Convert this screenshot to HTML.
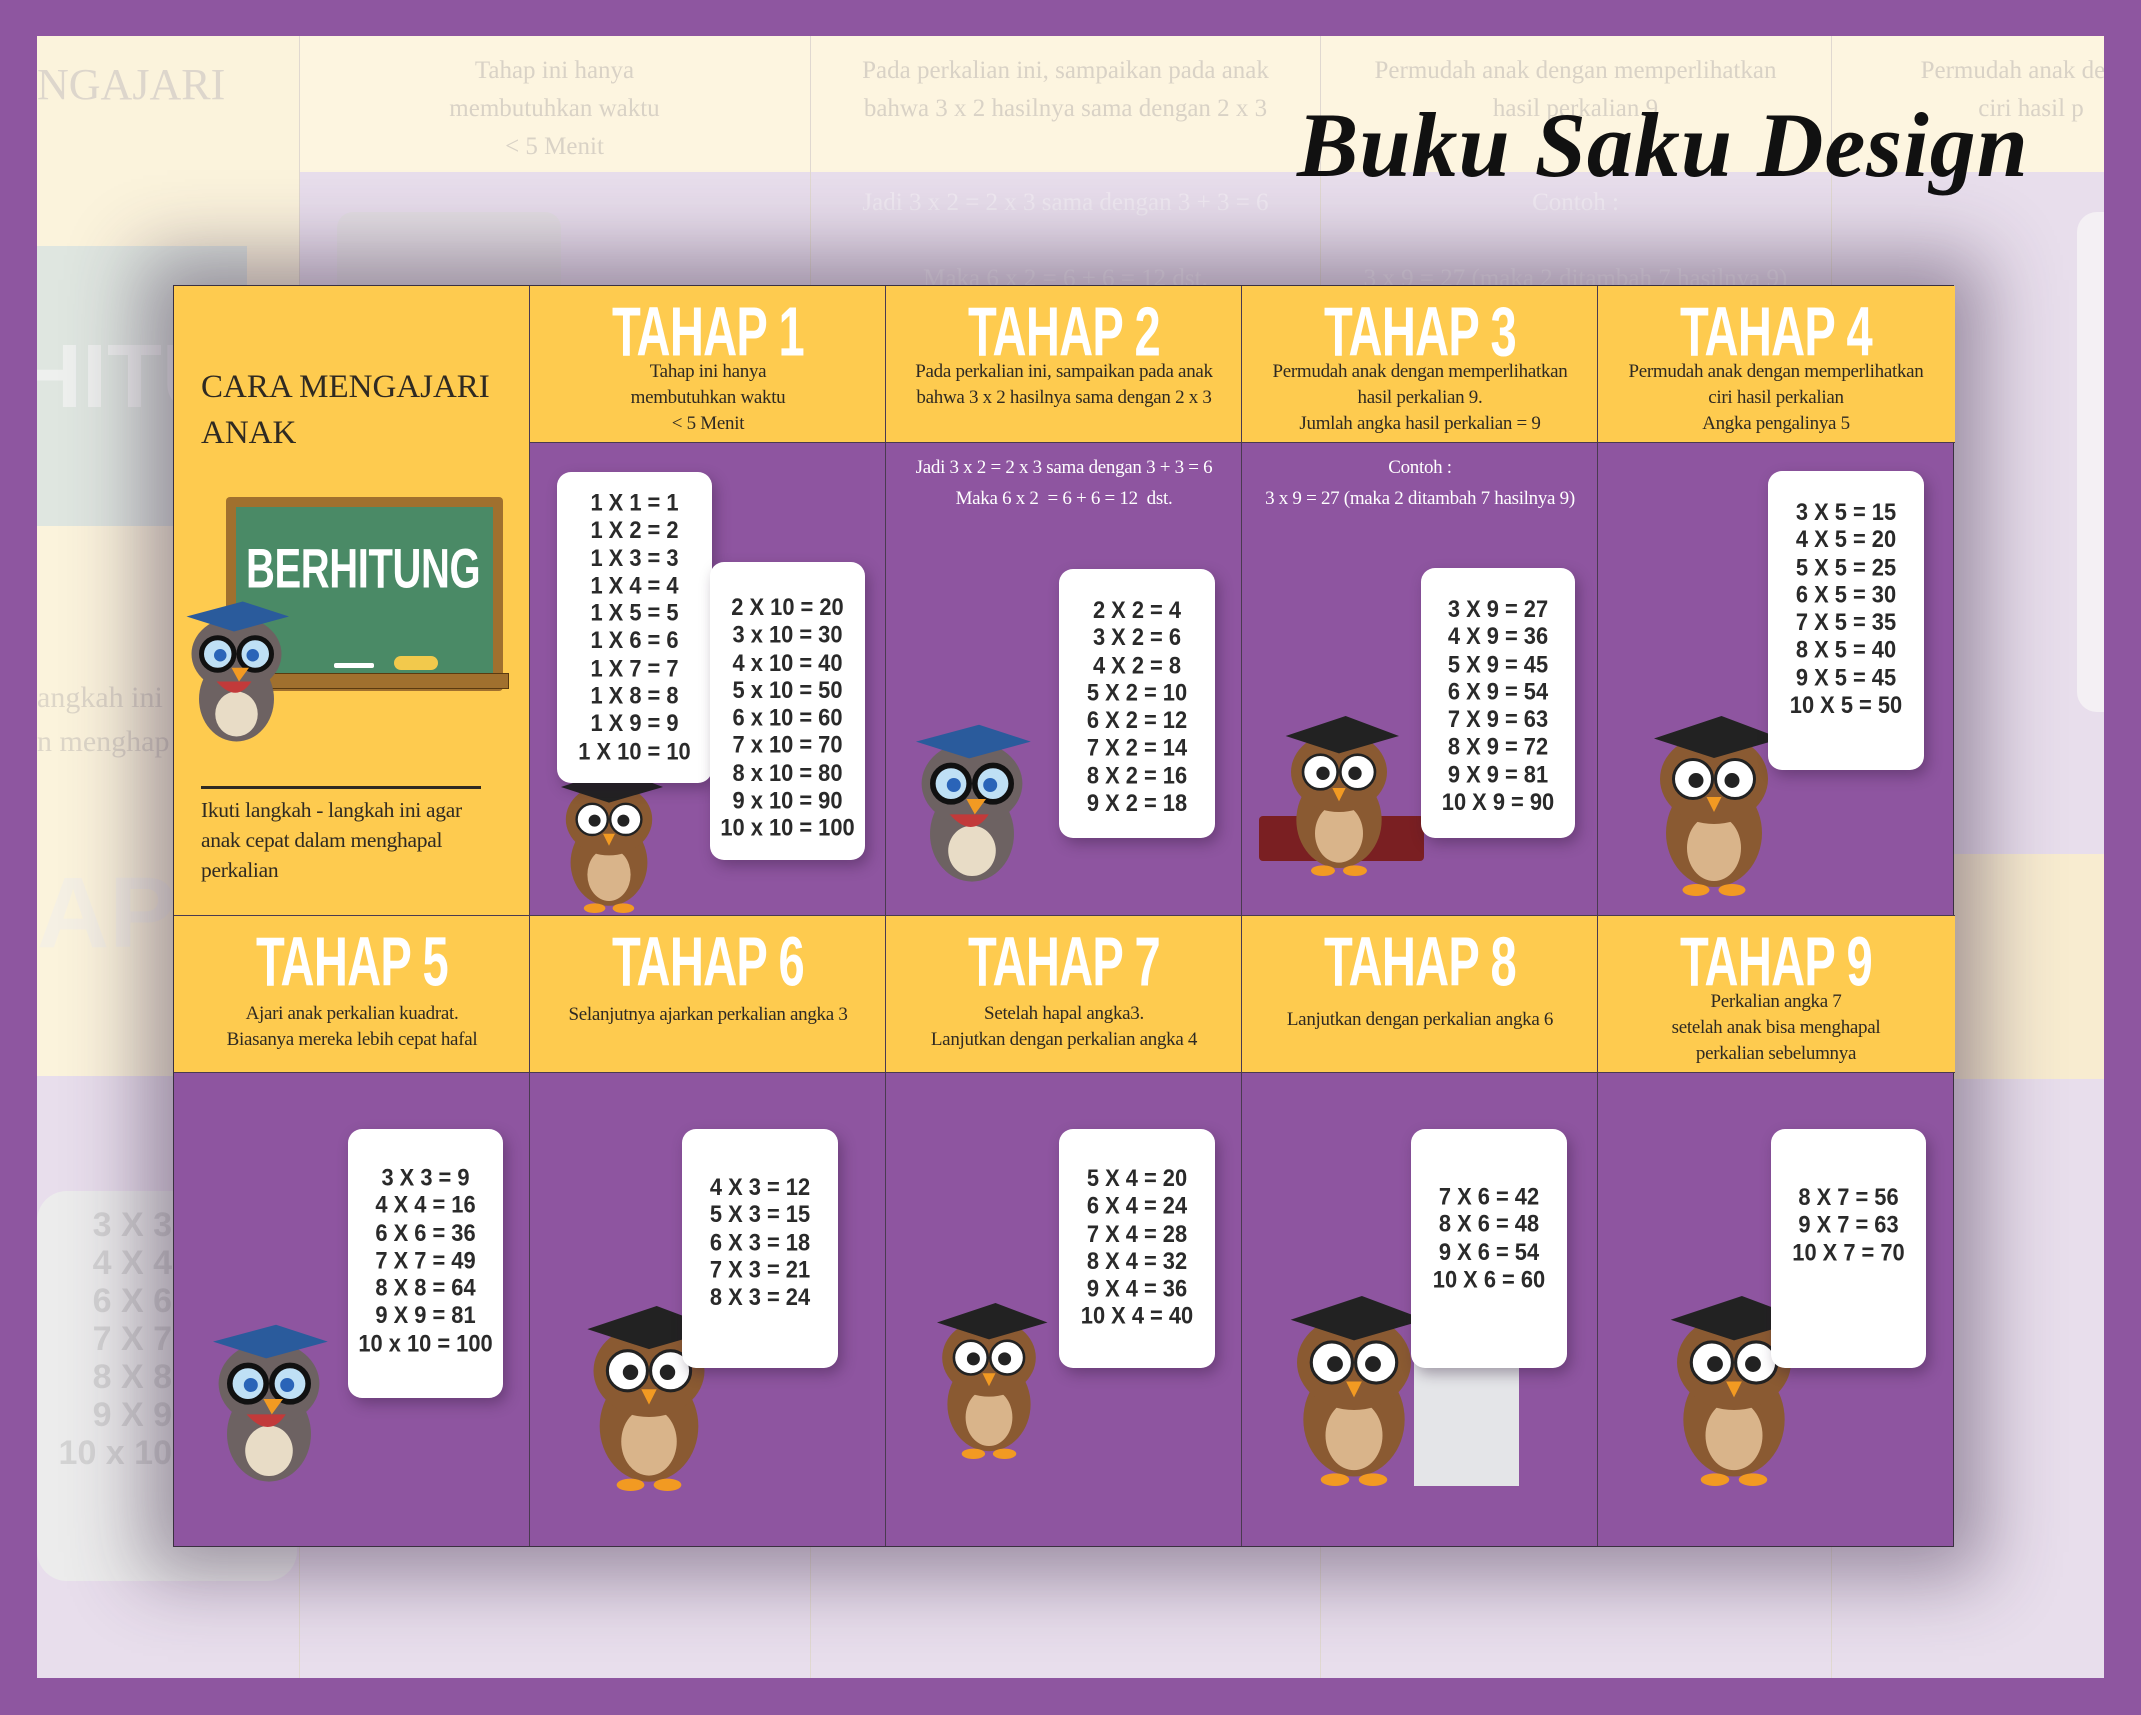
<!DOCTYPE html>
<html><head><meta charset="utf-8"><style>
*{margin:0;padding:0;box-sizing:border-box}
body{width:2141px;height:1715px;background:#8e56a0;position:relative;overflow:hidden;font-family:"Liberation Sans",sans-serif}
.abs{position:absolute}
#inner{left:37px;top:36px;width:2067px;height:1642px;background:#e8deec;overflow:hidden}
.fade{color:#d9d2c6;font-family:"Liberation Serif",serif;text-align:center;font-size:25px;line-height:38px}
#card{left:173px;top:285px;width:1781px;height:1262px;box-shadow:0 0 70px 30px rgba(60,40,70,.45);border:1.5px solid #3a3040;background:#8e55a0}
.y{background:#fecb4f}
.cell{position:absolute;border-right:1px solid #4a3a50;border-bottom:1px solid #4a3a50}
.tahap{position:absolute;width:356px;text-align:center;color:#fff;font-family:"Liberation Sans",sans-serif;font-weight:bold;font-size:62px;line-height:62px;transform:scale(0.76,1.12);letter-spacing:-1px}
.desc{position:absolute;width:356px;text-align:center;color:#2f2a22;font-family:"Liberation Serif",serif;font-size:19px;line-height:26px;letter-spacing:-0.3px}
.wdesc{color:#fff}
.tb{position:absolute;background:#fff;border-radius:14px;box-shadow:4px 6px 14px rgba(40,20,50,.35)}
.tt{position:absolute;left:0;right:0;text-align:center;font-weight:bold;font-size:23px;line-height:26.3px;color:#2a2a2a;transform:scale(0.95,1.05)}
</style></head><body>
<div id="inner" class="abs">
 <div class="abs" style="left:0;top:0;width:2067px;height:136px;background:#fdf5e0"></div>
 <div class="abs" style="left:0;top:0;width:262px;height:1040px;background:#fbf3dc"></div>
 <div class="abs" style="left:1900px;top:818px;width:167px;height:225px;background:#f8ecd0"></div>
 <div class="abs" style="left:262px;top:0;width:1px;height:1642px;background:#e0d8d0"></div>
 <div class="abs" style="left:773px;top:0;width:1px;height:1642px;background:#e0d8d0"></div>
 <div class="abs" style="left:1283px;top:0;width:1px;height:1642px;background:#e0d8d0"></div>
 <div class="abs" style="left:1794px;top:0;width:1px;height:1642px;background:#e0d8d0"></div>
 <div class="abs fade" style="left:262px;top:16px;width:511px">Tahap ini hanya<br>membutuhkan waktu<br>&lt; 5 Menit</div>
 <div class="abs fade" style="left:773px;top:16px;width:511px">Pada perkalian ini, sampaikan pada anak<br>bahwa 3 x 2 hasilnya sama dengan 2 x 3</div>
 <div class="abs fade" style="left:1283px;top:16px;width:511px">Permudah anak dengan memperlihatkan<br>hasil perkalian 9</div>
 <div class="abs fade" style="left:1794px;top:16px;width:400px">Permudah anak denga<br>ciri hasil p</div>
 <div class="abs fade" style="left:0;top:30px;font-size:44px;color:#ddd6cc">NGAJARI</div>
 <div class="abs fade" style="left:773px;top:148px;width:511px;color:#f0eaf2">Jadi 3 x 2 = 2 x 3 sama dengan 3 + 3 = 6<br><br>Maka 6 x 2 = 6 + 6 = 12 dst.</div>
 <div class="abs fade" style="left:1283px;top:148px;width:511px;color:#f0eaf2">Contoh :<br><br>3 x 9 = 27 (maka 2 ditambah 7 hasilnya 9)</div>
 <div class="abs" style="left:300px;top:176px;width:224px;height:100px;border-radius:16px;background:#e4dfe4"></div>
 <div class="abs" style="left:0;top:210px;width:210px;height:280px;background:#dfe6e0"></div>
 <div class="abs" style="left:-20px;top:290px;font-size:90px;font-weight:bold;color:#eef0ee">HITUN</div>
 <div class="abs fade" style="left:0;top:640px;font-size:30px;line-height:44px;text-align:left;color:#ddd6c8">angkah ini<br>n menghap</div>
 <div class="abs" style="left:0;top:820px;font-size:100px;font-weight:bold;color:#f5f0e4">AP 5</div>
 <div class="abs" style="left:0;top:1155px;width:260px;height:390px;border-radius:30px;background:#ececec"></div>
 <div class="abs" style="left:15px;top:1170px;font-size:34px;line-height:38px;font-weight:bold;color:#d4d4d4;text-align:right;width:120px">3 X 3<br>4 X 4<br>6 X 6<br>7 X 7<br>8 X 8<br>9 X 9<br>10 x 10</div>
 <div class="abs" style="left:2040px;top:176px;width:60px;height:500px;border-radius:20px;background:#f4f0f4"></div>
</div>
<div class="abs" style="left:1297px;top:92px;font-family:'Liberation Serif',serif;font-style:italic;font-weight:bold;font-size:92px;color:#111;letter-spacing:1px">Buku Saku Design</div>

<svg width="0" height="0" style="position:absolute"><defs>
<symbol id="owl" viewBox="0 0 100 120">
 <ellipse cx="50" cy="78" rx="32" ry="36" fill="#8a5a32"/>
 <ellipse cx="50" cy="88" rx="18" ry="22" fill="#d9b48a"/>
 <ellipse cx="50" cy="42" rx="36" ry="30" fill="#8a5a32"/>
 <circle cx="36" cy="42" r="13" fill="#fff" stroke="#222" stroke-width="2"/>
 <circle cx="64" cy="42" r="13" fill="#fff" stroke="#222" stroke-width="2"/>
 <circle cx="38" cy="43" r="5" fill="#222"/><circle cx="62" cy="43" r="5" fill="#222"/>
 <path d="M45 54 L55 54 L50 64Z" fill="#f29a22"/>
 <path d="M10 15 L55 0 L95 15 L50 28Z" fill="#222"/>
 <ellipse cx="38" cy="116" rx="9" ry="4" fill="#f29a22"/><ellipse cx="62" cy="116" rx="9" ry="4" fill="#f29a22"/>
</symbol>
<symbol id="owlg" viewBox="0 0 100 120">
 <ellipse cx="50" cy="80" rx="30" ry="34" fill="#6d6262"/>
 <ellipse cx="50" cy="92" rx="17" ry="18" fill="#e8dcc6"/>
 <ellipse cx="50" cy="44" rx="36" ry="30" fill="#6d6262"/>
 <circle cx="35" cy="44" r="13" fill="#bfe0f5" stroke="#111" stroke-width="4"/>
 <circle cx="65" cy="44" r="13" fill="#bfe0f5" stroke="#111" stroke-width="4"/>
 <circle cx="37" cy="45" r="5" fill="#2a64b8"/><circle cx="63" cy="45" r="5" fill="#2a64b8"/>
 <path d="M46 55 L60 55 L52 66Z" fill="#f29a22"/>
 <path d="M34 66 Q50 84 62 66Z" fill="#c23a3a"/>
 <path d="M10 14 L55 2 L92 14 L48 26Z" fill="#2a5b9c"/>
</symbol>
</defs></svg>

<div id="card" class="abs">
 <div class="cell y" style="left:0;top:0;width:356px;height:630px"></div>
 <div class="cell y" style="left:356px;top:0;width:356px;height:157px"></div>
 <div class="cell y" style="left:712px;top:0;width:356px;height:157px"></div>
 <div class="cell y" style="left:1068px;top:0;width:356px;height:157px"></div>
 <div class="cell y" style="left:1424px;top:0;width:357px;height:157px;border-right:none"></div>
 <div class="cell" style="left:356px;top:157px;width:356px;height:473px"></div>
 <div class="cell" style="left:712px;top:157px;width:356px;height:473px"></div>
 <div class="cell" style="left:1068px;top:157px;width:356px;height:473px"></div>
 <div class="cell" style="left:1424px;top:157px;width:357px;height:473px;border-right:none"></div>
 <div class="cell y" style="left:0;top:630px;width:356px;height:157px"></div>
 <div class="cell y" style="left:356px;top:630px;width:356px;height:157px"></div>
 <div class="cell y" style="left:712px;top:630px;width:356px;height:157px"></div>
 <div class="cell y" style="left:1068px;top:630px;width:356px;height:157px"></div>
 <div class="cell y" style="left:1424px;top:630px;width:357px;height:157px;border-right:none"></div>
 <div class="cell" style="left:0;top:787px;width:356px;height:473px;border-bottom:none"></div>
 <div class="cell" style="left:356px;top:787px;width:356px;height:473px;border-bottom:none"></div>
 <div class="cell" style="left:712px;top:787px;width:356px;height:473px;border-bottom:none"></div>
 <div class="cell" style="left:1068px;top:787px;width:356px;height:473px;border-bottom:none"></div>

 <div class="abs" style="left:27px;top:78px;font-family:'Liberation Serif',serif;font-size:33px;line-height:46px;color:#2f2a22">CARA MENGAJARI<br>ANAK</div>
 <div class="abs" style="left:52px;top:211px;width:277px;height:194px;background:#a0702e;border-radius:4px"></div>
 <div class="abs" style="left:62px;top:221px;width:257px;height:168px;background:#4a8a66"></div>
 <div class="abs" style="left:45px;top:387px;width:290px;height:16px;background:#a0702e;border:1px solid #5a3a10"></div>
 <div class="abs" style="left:160px;top:377px;width:40px;height:5px;background:#fff;border-radius:2px"></div>
 <div class="abs" style="left:220px;top:370px;width:44px;height:14px;background:#f2c94c;border-radius:8px"></div>
 <div class="abs" style="left:72px;top:250px;font-family:'Liberation Sans',sans-serif;font-weight:bold;font-size:50px;color:#fff;transform:scale(0.8,1.12);transform-origin:left top;letter-spacing:-0.5px">BERHITUNG</div>
 <svg class="abs" style="left:0;top:308px" width="125" height="160"><use href="#owlg"/></svg>
 <div class="abs" style="left:27px;top:500px;width:280px;height:3px;background:#2f2a22"></div>
 <div class="abs" style="left:27px;top:509px;font-family:'Liberation Serif',serif;font-size:21.5px;line-height:30px;color:#2f2a22;letter-spacing:-0.3px">Ikuti langkah - langkah ini agar<br>anak cepat dalam menghapal<br>perkalian</div>

 <div class="tahap" style="left:356px;top:16px">TAHAP 1</div>
 <div class="tahap" style="left:712px;top:16px">TAHAP 2</div>
 <div class="tahap" style="left:1068px;top:16px">TAHAP 3</div>
 <div class="tahap" style="left:1424px;top:16px">TAHAP 4</div>
 <div class="desc" style="left:356px;top:73px">Tahap ini hanya<br>membutuhkan waktu<br>&lt; 5 Menit</div>
 <div class="desc" style="left:712px;top:73px">Pada perkalian ini, sampaikan pada anak<br>bahwa 3 x 2 hasilnya sama dengan 2 x 3</div>
 <div class="desc" style="left:1068px;top:73px">Permudah anak dengan memperlihatkan<br>hasil perkalian 9.<br>Jumlah angka hasil perkalian = 9</div>
 <div class="desc" style="left:1424px;top:73px">Permudah anak dengan memperlihatkan<br>ciri hasil perkalian<br>Angka pengalinya 5</div>
 <div class="desc wdesc" style="left:712px;top:166px;line-height:31px">Jadi 3 x 2 = 2 x 3 sama dengan 3 + 3 = 6<br>Maka 6 x 2 &nbsp;= 6 + 6 = 12 &nbsp;dst.</div>
 <div class="desc wdesc" style="left:1068px;top:166px;line-height:31px">Contoh :<br>3 x 9 = 27 (maka 2 ditambah 7 hasilnya 9)</div>

 <div class="tahap" style="left:0;top:646px">TAHAP 5</div>
 <div class="tahap" style="left:356px;top:646px">TAHAP 6</div>
 <div class="tahap" style="left:712px;top:646px">TAHAP 7</div>
 <div class="tahap" style="left:1068px;top:646px">TAHAP 8</div>
 <div class="tahap" style="left:1424px;top:646px">TAHAP 9</div>
 <div class="desc" style="left:0;top:715px">Ajari anak perkalian kuadrat.<br>Biasanya mereka lebih cepat hafal</div>
 <div class="desc" style="left:356px;top:716px">Selanjutnya ajarkan perkalian angka 3</div>
 <div class="desc" style="left:712px;top:715px">Setelah hapal angka3.<br>Lanjutkan dengan perkalian angka 4</div>
 <div class="desc" style="left:1068px;top:721px">Lanjutkan dengan perkalian angka 6</div>
 <div class="desc" style="left:1424px;top:703px">Perkalian angka 7<br>setelah anak bisa menghapal<br>perkalian sebelumnya</div>

 <svg class="abs" style="left:375px;top:480px" width="120" height="150"><use href="#owl"/></svg>
 <svg class="abs" style="left:728px;top:430px" width="140" height="180"><use href="#owlg"/></svg>
 <div class="abs" style="left:1085px;top:530px;width:165px;height:45px;background:#7a1f22;border-radius:4px"></div>
 <svg class="abs" style="left:1095px;top:430px" width="140" height="160"><use href="#owl"/></svg>
 <svg class="abs" style="left:1460px;top:430px" width="160" height="180"><use href="#owl"/></svg>
 <svg class="abs" style="left:25px;top:1030px" width="140" height="180"><use href="#owlg"/></svg>
 <svg class="abs" style="left:385px;top:1020px" width="180" height="185"><use href="#owl"/></svg>
 <svg class="abs" style="left:750px;top:990px" width="130" height="210"><use href="#owl"/></svg>
 <svg class="abs" style="left:1090px;top:1010px" width="180" height="190"><use href="#owl"/></svg>
 <div class="abs" style="left:1240px;top:1075px;width:105px;height:125px;background:#e4e5e8"></div>
 <svg class="abs" style="left:1460px;top:1010px" width="200" height="190"><use href="#owl"/></svg>

 <div class="tb" style="left:383px;top:186px;width:155px;height:311px"><div class="tt" style="top:23px">1 X 1 = 1<br>1 X 2 = 2<br>1 X 3 = 3<br>1 X 4 = 4<br>1 X 5 = 5<br>1 X 6 = 6<br>1 X 7 = 7<br>1 X 8 = 8<br>1 X 9 = 9<br>1 X 10 = 10</div></div>
 <div class="tb" style="left:536px;top:276px;width:155px;height:298px"><div class="tt" style="top:37px">2 X 10 = 20<br>3 x 10 = 30<br>4 x 10 = 40<br>5 x 10 = 50<br>6 x 10 = 60<br>7 x 10 = 70<br>8 x 10 = 80<br>9 x 10 = 90<br>10 x 10 = 100</div></div>
 <div class="tb" style="left:885px;top:283px;width:156px;height:269px"><div class="tt" style="top:32px">2 X 2 = 4<br>3 X 2 = 6<br>4 X 2 = 8<br>5 X 2 = 10<br>6 X 2 = 12<br>7 X 2 = 14<br>8 X 2 = 16<br>9 X 2 = 18</div></div>
 <div class="tb" style="left:1247px;top:282px;width:154px;height:270px"><div class="tt" style="top:32px">3 X 9 = 27<br>4 X 9 = 36<br>5 X 9 = 45<br>6 X 9 = 54<br>7 X 9 = 63<br>8 X 9 = 72<br>9 X 9 = 81<br>10 X 9 = 90</div></div>
 <div class="tb" style="left:1594px;top:185px;width:156px;height:299px"><div class="tt" style="top:32px">3 X 5 = 15<br>4 X 5 = 20<br>5 X 5 = 25<br>6 X 5 = 30<br>7 X 5 = 35<br>8 X 5 = 40<br>9 X 5 = 45<br>10 X 5 = 50</div></div>
 <div class="tb" style="left:174px;top:843px;width:155px;height:269px"><div class="tt" style="top:39px">3 X 3 = 9<br>4 X 4 = 16<br>6 X 6 = 36<br>7 X 7 = 49<br>8 X 8 = 64<br>9 X 9 = 81<br>10 x 10 = 100</div></div>
 <div class="tb" style="left:508px;top:843px;width:156px;height:239px"><div class="tt" style="top:47px">4 X 3 = 12<br>5 X 3 = 15<br>6 X 3 = 18<br>7 X 3 = 21<br>8 X 3 = 24</div></div>
 <div class="tb" style="left:885px;top:843px;width:156px;height:239px"><div class="tt" style="top:39px">5 X 4 = 20<br>6 X 4 = 24<br>7 X 4 = 28<br>8 X 4 = 32<br>9 X 4 = 36<br>10 X 4 = 40</div></div>
 <div class="tb" style="left:1237px;top:843px;width:156px;height:239px"><div class="tt" style="top:56px">7 X 6 = 42<br>8 X 6 = 48<br>9 X 6 = 54<br>10 X 6 = 60</div></div>
 <div class="tb" style="left:1597px;top:843px;width:155px;height:239px"><div class="tt" style="top:56px">8 X 7 = 56<br>9 X 7 = 63<br>10 X 7 = 70</div></div>
</div>
</body></html>
